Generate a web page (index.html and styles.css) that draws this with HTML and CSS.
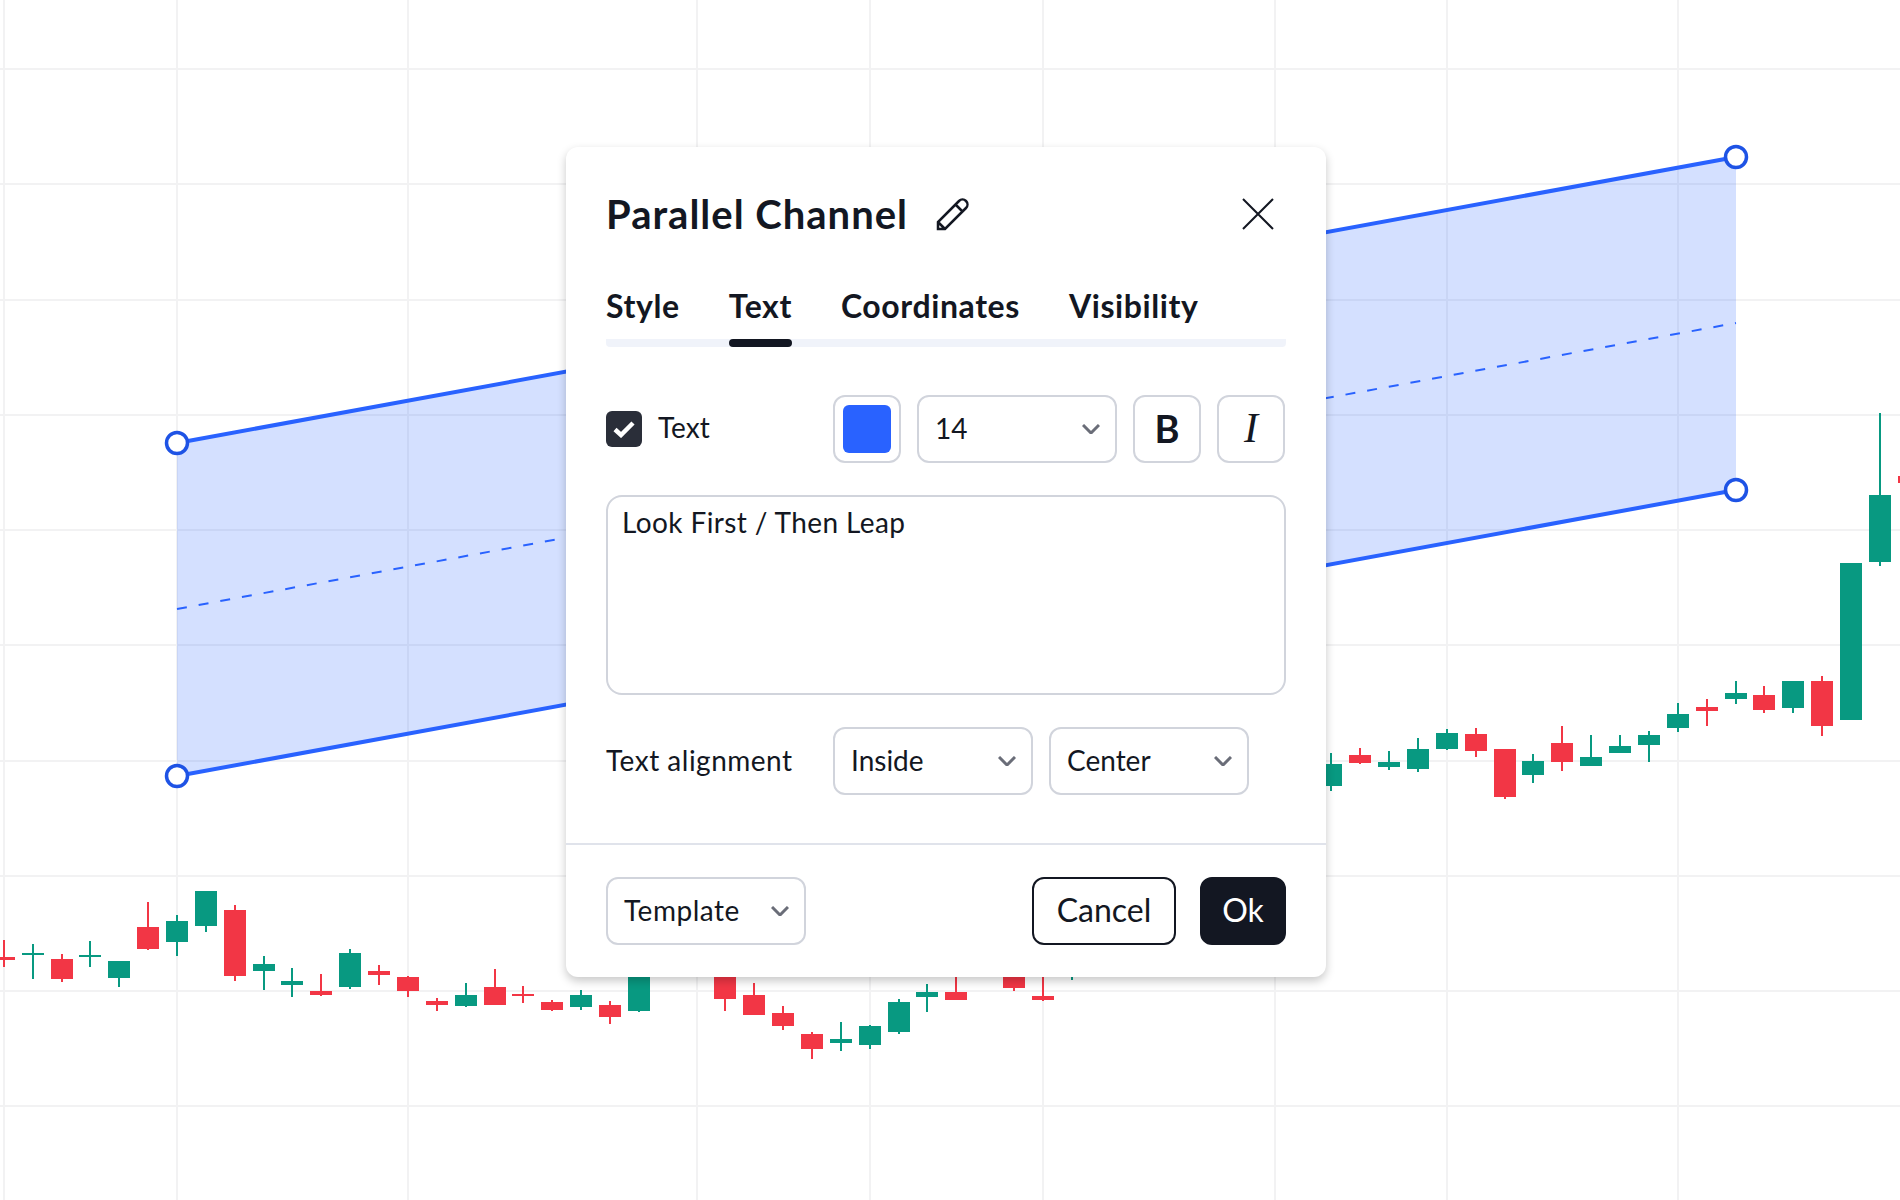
FILE: index.html
```html
<!DOCTYPE html>
<html lang="en">
<head>
    <meta charset="UTF-8">
    <meta name="viewport" content="width=device-width, initial-scale=1.0">
    <title>Parallel Channel</title>
    <link rel="stylesheet" href="styles.css">
</head>
<body>
    <div class="stage">
        <svg class="chart" width="1900" height="1200" viewBox="0 0 1900 1200">
            <path class="grid" d="M0 69H1900M0 184H1900M0 300H1900M0 415H1900M0 530H1900M0 645H1900M0 761H1900M0 876H1900M0 991H1900M0 1106H1900"/>
            <path class="grid" d="M4 0V1200M177 0V1200M408 0V1200M697 0V1200M870 0V1200M1043 0V1200M1275 0V1200M1447 0V1200M1678 0V1200"/>

            <!-- channel -->
            <polygon class="channel-fill" points="177,443 1736,157 1736,490 177,776"/>
            <line class="channel-mid" x1="177" y1="609" x2="1736" y2="323"/>
            <line class="channel-edge" x1="177" y1="443" x2="1736" y2="157"/>
            <line class="channel-edge" x1="177" y1="776" x2="1736" y2="490"/>
            <circle class="handle" cx="177" cy="443" r="10.5"/>
            <circle class="handle" cx="177" cy="776" r="10.5"/>
            <circle class="handle" cx="1736" cy="157" r="10.5"/>
            <circle class="handle" cx="1736" cy="490" r="10.5"/>

            <!-- candles: wicks first, then bodies -->
            <path class="wick up" d="M33 944V979M90 941V967M119 961V987M177 915V956M206 891V932M264 956V990M292 968V997M350 949V989M466 983V1007M581 990V1010M639 977V1012M841 1022V1051M870 1025V1049M899 999V1034M927 984V1012M1072 970V980M1331 753V791M1389 751V770M1418 738V772M1447 729V750M1533 754V783M1591 735V766M1620 735V753M1649 731V762M1678 703V732M1736 681V704M1793 681V713M1880 413V566"/>
            <path class="wick down" d="M4 940V967M62 954V982M148 902V950M235 905V981M321 974V996M379 965V985M408 976V997M437 998V1011M495 969V1005M523 986V1003M552 1000V1011M610 1001V1024M725 977V1011M754 983V995M783 1006V1030M812 1032V1059M956 970V992M1014 970V991M1043 970V1001M1360 748V764M1476 728V757M1505 749V799M1562 726V771M1707 699V726M1764 686V713M1822 676V736"/>
            <path class="body up" d="M22 953h22v2h-22zM79 955h22v2h-22zM108 961h22v17h-22zM166 921h22v21h-22zM195 891h22v35h-22zM253 964h22v7h-22zM281 981h22v4h-22zM339 953h22v34h-22zM455 995h22v11h-22zM570 995h22v12h-22zM628 977h22v34h-22zM830 1039h22v4h-22zM859 1026h22v19h-22zM888 1002h22v30h-22zM916 992h22v5h-22zM1320 764h22v22h-22zM1378 762h22v5h-22zM1407 749h22v20h-22zM1436 733h22v16h-22zM1522 761h22v14h-22zM1580 757h22v9h-22zM1609 746h22v7h-22zM1638 735h22v10h-22zM1667 714h22v14h-22zM1725 693h22v6h-22zM1782 681h22v27h-22zM1840 563h22v157h-22zM1869 495h22v67h-22z"/>
            <path class="body down" d="M-7 957h22v3h-22zM51 959h22v20h-22zM137 927h22v22h-22zM224 910h22v66h-22zM310 991h22v4h-22zM368 971h22v4h-22zM397 977h22v14h-22zM426 1001h22v4h-22zM484 987h22v18h-22zM512 994h22v2h-22zM541 1002h22v8h-22zM599 1005h22v12h-22zM714 977h22v22h-22zM743 995h22v20h-22zM772 1013h22v13h-22zM801 1034h22v15h-22zM945 992h22v8h-22zM1003 970h22v18h-22zM1032 996h22v4h-22zM1349 755h22v8h-22zM1465 734h22v17h-22zM1494 749h22v48h-22zM1551 743h22v19h-22zM1696 707h22v4h-22zM1753 695h22v15h-22zM1811 681h22v45h-22zM1898 476h22v7h-22z"/>
        </svg>

        <div class="dialog">
            <header class="dialog-head">
                <h1>Parallel Channel</h1>
                <svg class="icon-pencil" width="34" height="34" viewBox="0 0 34 34">
                    <path d="M2 32V25L23 4A4.5 4.5 0 0 1 30 11L9 32ZM2 25L9 32M19.5 7.5L26.5 14.5"/>
                </svg>
                <svg class="icon-close" width="32" height="32" viewBox="0 0 32 32">
                    <path d="M1 1L31 31M31 1L1 31"/>
                </svg>
            </header>

            <nav class="tabs">
                <span class="tab">Style</span>
                <span class="tab active">Text</span>
                <span class="tab">Coordinates</span>
                <span class="tab">Visibility</span>
            </nav>

            <div class="dialog-body">
                <div class="row">
                    <label class="check">
                        <span class="check-box">
                            <svg width="22" height="18" viewBox="0 0 22 18"><path d="M2 9.5L8 15L20 3"/></svg>
                        </span>
                        Text
                    </label>
                    <div class="controls">
                        <button class="square"><span class="swatch"></span></button>
                        <div class="select size">14<svg class="chevron" width="18" height="10" viewBox="0 0 18 10"><path d="M1 1L9 9L17 1"/></svg></div>
                        <button class="square bold">B</button>
                        <button class="square italic">I</button>
                    </div>
                </div>

                <div class="textarea">Look First / Then Leap</div>

                <div class="row">
                    <span class="label">Text alignment</span>
                    <div class="controls">
                        <div class="select">Inside<svg class="chevron" width="18" height="10" viewBox="0 0 18 10"><path d="M1 1L9 9L17 1"/></svg></div>
                        <div class="select">Center<svg class="chevron" width="18" height="10" viewBox="0 0 18 10"><path d="M1 1L9 9L17 1"/></svg></div>
                    </div>
                </div>
            </div>

            <footer class="dialog-foot">
                <div class="select template">Template<svg class="chevron" width="18" height="10" viewBox="0 0 18 10"><path d="M1 1L9 9L17 1"/></svg></div>
                <div class="actions">
                    <button class="btn cancel">Cancel</button>
                    <button class="btn ok">Ok</button>
                </div>
            </footer>
        </div>
    </div>
</body>
</html>
```

FILE: styles.css
```css
* {
    box-sizing: border-box;
}
body {
    margin: 0;
    background-color: #fff;
    color: #131722;
    font-family: 'Lato', 'Open Sans', sans-serif;
}
.stage {
    position: relative;
    width: 1900px;
    height: 1200px;
    overflow: hidden;
}

/* chart */
.chart {
    position: absolute;
    left: 0;
    top: 0;
}
.grid {
    stroke: #f2f2f3;
    stroke-width: 2;
    fill: none;
}
.channel-fill {
    fill: rgba(41, 98, 255, 0.2);
}
.channel-edge {
    stroke: #2962ff;
    stroke-width: 4;
}
.channel-mid {
    stroke: #2962ff;
    stroke-width: 2;
    stroke-dasharray: 10 12;
}
.handle {
    fill: #fff;
    stroke: #1e53e5;
    stroke-width: 3.5;
}
.wick {
    stroke-width: 2;
    fill: none;
    shape-rendering: crispEdges;
}
.wick.up { stroke: #089981; }
.wick.down { stroke: #f23645; }
.body { shape-rendering: crispEdges; }
.body.up { fill: #089981; }
.body.down { fill: #f23645; }

/* dialog */
.dialog {
    position: absolute;
    left: 566px;
    top: 147px;
    width: 760px;
    height: 830px;
    background-color: #fff;
    border-radius: 12px;
    box-shadow: 0 4px 10px rgba(0, 0, 0, 0.22);
    display: flex;
    flex-direction: column;
}
.dialog-head {
    display: flex;
    align-items: center;
    padding: 0 52px 0 40px;
    height: 134px;
}
h1 {
    margin: 0;
    font-size: 40px;
    font-weight: 700;
    letter-spacing: 1px;
    line-height: 46px;
    white-space: nowrap;
}
.icon-pencil {
    margin-left: 28px;
    fill: none;
    stroke: #131722;
    stroke-width: 2.5;
}
.icon-close {
    margin-left: auto;
    fill: none;
    stroke: #131722;
    stroke-width: 2;
}
.tabs {
    display: flex;
    gap: 49px;
    margin: 3px 40px 0;
    height: 63px;
    border-radius: 4px;
    background: linear-gradient(#f0f3fa, #f0f3fa) bottom / 100% 8px no-repeat;
}
.tab {
    position: relative;
    font-size: 32px;
    font-weight: 700;
    letter-spacing: 0.6px;
    line-height: 44px;
}
.tab.active::after {
    content: "";
    position: absolute;
    left: 0;
    right: 0;
    top: 55px;
    height: 8px;
    border-radius: 4px;
    background-color: #131722;
}
.dialog-body {
    flex: 1;
    padding: 48px 40px 0;
    display: flex;
    flex-direction: column;
    gap: 32px;
}
.row {
    display: flex;
    align-items: center;
}
.check, .label {
    width: 227px;
    display: flex;
    align-items: center;
    gap: 16px;
    font-size: 28px;
}
.check {
    padding-bottom: 4px;
}
.label {
    padding-bottom: 2px;
    letter-spacing: 0.5px;
}
.check-box {
    width: 36px;
    height: 36px;
    margin-bottom: -4px;
    border-radius: 6px;
    background-color: #2a2e39;
    display: flex;
    align-items: center;
    justify-content: center;
}
.check-box path {
    fill: none;
    stroke: #fff;
    stroke-width: 4.5;
}
.controls {
    display: flex;
    gap: 16px;
}
.square, .select, .textarea {
    border: 2px solid #d1d4dc;
    background-color: #fff;
    border-radius: 12px;
    color: #131722;
    font-family: inherit;
    font-size: 28px;
}
.square {
    width: 68px;
    height: 68px;
    padding: 0;
    display: flex;
    align-items: center;
    justify-content: center;
}
.swatch {
    width: 48px;
    height: 48px;
    border-radius: 6px;
    background-color: #2962ff;
}
.bold {
    padding-bottom: 3px;
    font-size: 38px;
    font-weight: 700;
}
.italic {
    padding-bottom: 3px;
    font-family: 'Liberation Serif', serif;
    font-style: italic;
    font-size: 42px;
}
.select {
    width: 200px;
    height: 68px;
    padding: 0 15px 2px 16px;
    display: flex;
    align-items: center;
    justify-content: space-between;
}
.template {
    letter-spacing: 0.5px;
}
.chevron {
    margin-top: 2px;
    fill: none;
    stroke: #6a6d78;
    stroke-width: 3;
}
.textarea {
    height: 200px;
    border-radius: 16px;
    padding: 6px 14px;
    letter-spacing: 0.4px;
    line-height: 38px;
}
.dialog-foot {
    height: 134px;
    border-top: 2px solid #e0e3eb;
    padding: 32px 40px 0;
    display: flex;
    justify-content: space-between;
    align-items: flex-start;
}
.actions {
    display: flex;
    gap: 24px;
}
.btn {
    height: 68px;
    border-radius: 12px;
    border: 2px solid #131722;
    font-family: inherit;
    font-size: 32px;
    padding: 0 0 3px;
    color: #131722;
}
.cancel {
    width: 144px;
    background-color: #fff;
}
.ok {
    width: 86px;
    background-color: #131722;
    color: #fff;
}
```
